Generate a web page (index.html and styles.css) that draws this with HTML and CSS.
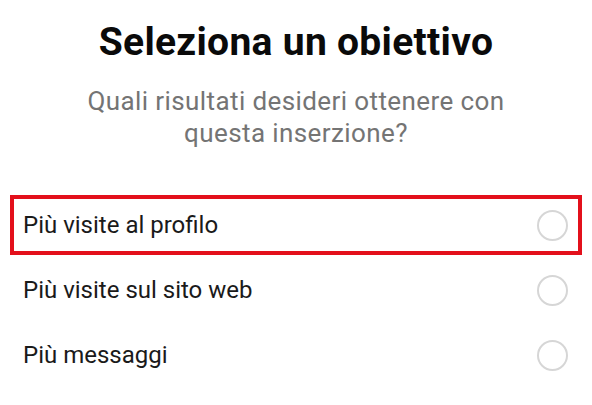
FILE: index.html
```html
<!DOCTYPE html>
<html>
<head>
    <meta charset="UTF-8">
    <meta name="viewport" content="width=device-width, initial-scale=1.0">
    <title>Seleziona un obiettivo</title>
    <link rel="stylesheet" href="styles.css">
</head>
<body>
    <div class="header">
        <h1>Seleziona un obiettivo</h1>
        <p class="subtitle">Quali risultati desideri ottenere con<br>questa inserzione?</p>
    </div>

    <div class="options">
        <label class="option highlighted">
            <span class="option-label">Più visite al profilo</span>
            <span class="radio"></span>
        </label>
        <label class="option">
            <span class="option-label">Più visite sul sito web</span>
            <span class="radio"></span>
        </label>
        <label class="option">
            <span class="option-label">Più messaggi</span>
            <span class="radio"></span>
        </label>
    </div>
</body>
</html>
```

FILE: styles.css
```css
body {
    font-family: Roboto, "Noto Sans", Arial, sans-serif;
    margin: 0;
    padding: 19px 0 0;
    background-color: #fff;
    color: #111;
}
.header {
    text-align: center;
}
h1 {
    font-size: 39px;
    line-height: 46px;
    letter-spacing: 0.3px;
    font-weight: 700;
    margin: 0;
    color: #0a0a0a;
}
.subtitle {
    font-size: 26px;
    line-height: 32px;
    letter-spacing: 0.4px;
    color: #747474;
    margin: 20px 0 0;
}
.options {
    margin: 46px 10px 0;
    display: flex;
    flex-direction: column;
    gap: 5px;
}
.option {
    display: flex;
    align-items: center;
    justify-content: space-between;
    height: 60px;
    box-sizing: border-box;
    border: 4px solid transparent;
    padding: 0 10px 0 9px;
    font-size: 24px;
    color: #1a1a1a;
}
.option.highlighted {
    border-color: #e3101b;
}
.radio {
    width: 27px;
    height: 27px;
    border: 2px solid #d6d6d6;
    border-radius: 50%;
}
```
